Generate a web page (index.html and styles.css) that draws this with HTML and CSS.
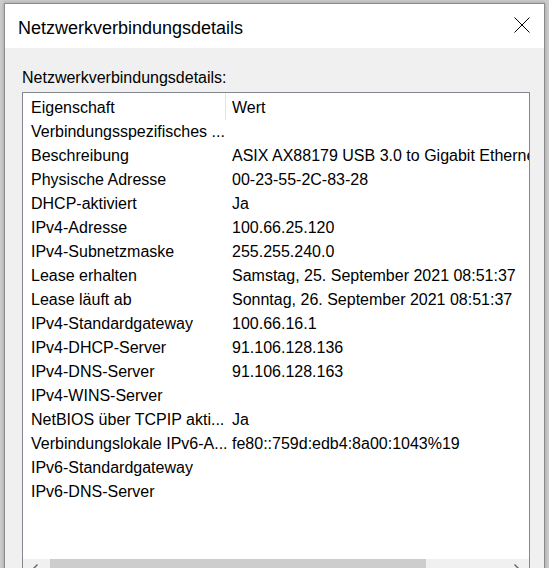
FILE: index.html
```html
<!DOCTYPE html>
<html lang="de">
<head>
    <meta charset="UTF-8">
    <meta name="viewport" content="width=device-width, initial-scale=1.0">
    <title>Netzwerkverbindungsdetails</title>
    <link rel="stylesheet" href="styles.css">
</head>
<body>
    <div class="window">
        <!-- Title bar -->
        <div class="titlebar">
            <span class="title">Netzwerkverbindungsdetails</span>
            <button class="close-btn" title="Schließen">
                <svg width="16" height="16" viewBox="0 0 16 16">
                    <path d="M0.5 0.5 L15.5 15.5 M15.5 0.5 L0.5 15.5" stroke="#000" stroke-width="1" fill="none"/>
                </svg>
            </button>
        </div>

        <div class="dialog-body">
            <div class="group-label">Netzwerkverbindungsdetails:</div>

            <!-- Details list view -->
            <div class="listview">
                <div class="rows">
                    <div class="row header">
                        <div class="cell prop">Eigenschaft</div>
                        <div class="cell val">Wert</div>
                    </div>
                    <div class="row"><div class="cell prop">Verbindungsspezifisches ...</div><div class="cell val"></div></div>
                    <div class="row"><div class="cell prop">Beschreibung</div><div class="cell val">ASIX AX88179 USB 3.0 to Gigabit Ethernet Adapter</div></div>
                    <div class="row"><div class="cell prop">Physische Adresse</div><div class="cell val">00-23-55-2C-83-28</div></div>
                    <div class="row"><div class="cell prop">DHCP-aktiviert</div><div class="cell val">Ja</div></div>
                    <div class="row"><div class="cell prop">IPv4-Adresse</div><div class="cell val">100.66.25.120</div></div>
                    <div class="row"><div class="cell prop">IPv4-Subnetzmaske</div><div class="cell val">255.255.240.0</div></div>
                    <div class="row"><div class="cell prop">Lease erhalten</div><div class="cell val">Samstag, 25. September 2021 08:51:37</div></div>
                    <div class="row"><div class="cell prop">Lease läuft ab</div><div class="cell val">Sonntag, 26. September 2021 08:51:37</div></div>
                    <div class="row"><div class="cell prop">IPv4-Standardgateway</div><div class="cell val">100.66.16.1</div></div>
                    <div class="row"><div class="cell prop">IPv4-DHCP-Server</div><div class="cell val">91.106.128.136</div></div>
                    <div class="row"><div class="cell prop">IPv4-DNS-Server</div><div class="cell val">91.106.128.163</div></div>
                    <div class="row"><div class="cell prop">IPv4-WINS-Server</div><div class="cell val"></div></div>
                    <div class="row"><div class="cell prop">NetBIOS über TCPIP akti...</div><div class="cell val">Ja</div></div>
                    <div class="row"><div class="cell prop">Verbindungslokale IPv6-A...</div><div class="cell val">fe80::759d:edb4:8a00:1043%19</div></div>
                    <div class="row"><div class="cell prop">IPv6-Standardgateway</div><div class="cell val"></div></div>
                    <div class="row"><div class="cell prop">IPv6-DNS-Server</div><div class="cell val"></div></div>
                </div>

                <!-- Horizontal scrollbar -->
                <div class="hscroll">
                    <div class="arrow-btn">
                        <svg width="8" height="8" viewBox="0 0 8 8"><path d="M5.5 0.5 L2 4 L5.5 7.5" stroke="#606060" stroke-width="1.4" fill="none"/></svg>
                    </div>
                    <div class="thumb"></div>
                    <div class="track"></div>
                    <div class="arrow-btn">
                        <svg width="8" height="8" viewBox="0 0 8 8"><path d="M2.5 0.5 L6 4 L2.5 7.5" stroke="#606060" stroke-width="1.4" fill="none"/></svg>
                    </div>
                </div>
            </div>
        </div>
    </div>
</body>
</html>
```

FILE: styles.css
```css
body {
    margin: 0;
    padding: 0;
    background: #cdcdcd;
    overflow: hidden;
    font-family: 'Liberation Sans', Arial, sans-serif;
    color: #000;
}

/* Dialog window */
.window {
    margin: 3px 4px 0 4px;
    width: 541px;
    height: 600px;
    box-sizing: border-box;
    border: 1px solid #8c8c8c;
    background: #f0f0f0;
    box-shadow: 0 0 4px rgba(0, 0, 0, 0.25);
}

.titlebar {
    display: flex;
    justify-content: space-between;
    align-items: flex-start;
    height: 44px;
    box-sizing: border-box;
    padding: 14px 14px 0 13px;
    background: #fff;
}

.title {
    font-size: 18px;
    line-height: 20px;
}

.close-btn {
    margin-top: -1px;
    padding: 0;
    width: 16px;
    height: 16px;
    background: none;
    border: none;
    display: flex;
}

.dialog-body {
    padding: 21px 14px 0 17px;
}

.group-label {
    font-size: 16px;
    line-height: 18px;
    margin-bottom: 5px;
}

/* List view */
.listview {
    display: flex;
    flex-direction: column;
    width: 508px;
    height: 520px;
    box-sizing: border-box;
    border: 1px solid #828790;
    background: #fff;
}

.rows {
    height: 466px;
    box-sizing: border-box;
    padding-top: 3px;
    overflow: hidden;
}

.row {
    display: grid;
    grid-template-columns: 203px max-content;
    height: 24px;
    font-size: 16px;
    line-height: 24px;
    white-space: nowrap;
}

.cell.prop {
    padding-left: 8px;
    box-sizing: border-box;
}

.cell.val {
    padding-left: 6px;
}

.row.header .cell.prop {
    border-right: 1px solid #e5e5e5;
    margin-top: -3px;
    padding-top: 3px;
    height: 27px;
}

/* Horizontal scrollbar */
.hscroll {
    display: flex;
    height: 17px;
    background: #f0f0f0;
}

.arrow-btn {
    width: 26px;
    display: flex;
    justify-content: center;
    align-items: center;
}

.thumb {
    width: 376px;
    margin-left: 1px;
    background: #cdcdcd;
}

.track {
    flex: 1;
}
```
